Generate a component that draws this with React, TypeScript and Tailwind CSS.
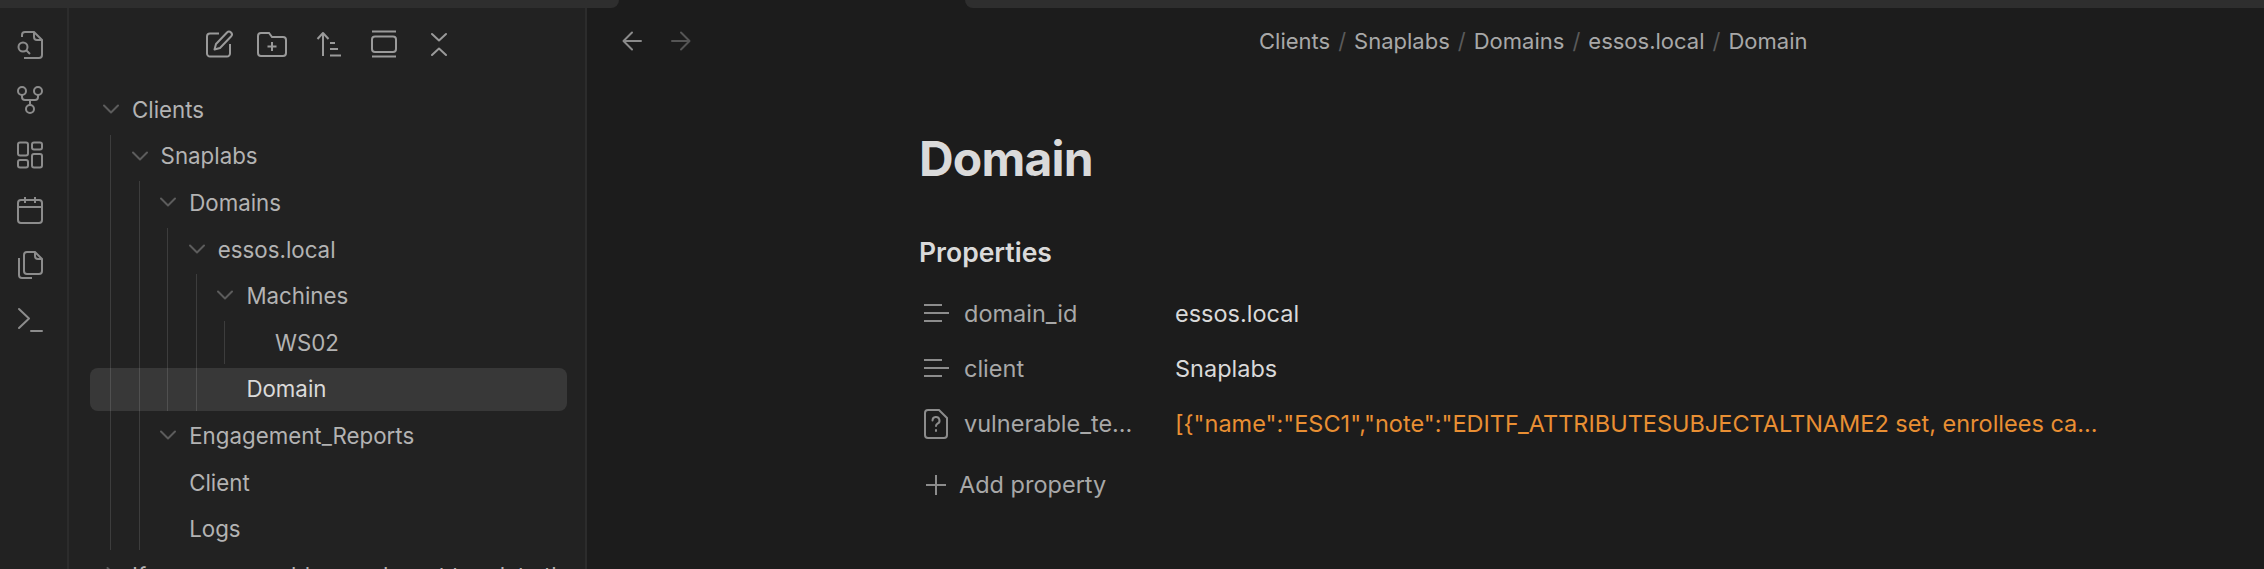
import React from "react";

const line = "fill-none stroke-current stroke-[2]";

function Chevron({ className = "" }: { className?: string }) {
  return (
    <svg viewBox="0 0 16 10" className={`w-[16px] h-[10px] text-[#5c5c5c] ${className}`}>
      <path d="M1 1.5 L8 8.5 L15 1.5" className={line} strokeLinecap="round" strokeLinejoin="round" />
    </svg>
  );
}

function Row({ label, open, closed, active }: { label: string; open?: boolean; closed?: boolean; active?: boolean }) {
  return (
    <div
      className={`h-[43px] shrink-0 flex items-center relative ${active ? "bg-white/10 rounded-lg text-[#dadada] -ml-[156px] pl-[156px]" : "text-[#b3b3b3]"}`}
    >
      {open && <Chevron className="absolute left-[-29px] top-[16px]" />}
      {closed && <Chevron className="absolute left-[-29px] top-[16px] -rotate-90" />}
      <span className="whitespace-nowrap">{label}</span>
    </div>
  );
}

// children hang off a guide line, next level is 28.6px further in
function Nest({ children }: { children: React.ReactNode }) {
  return <div className="ml-[-22px] pl-[49.6px] border-l border-[#3d3d3d] flex flex-col gap-[3.6px]">{children}</div>;
}

function Sidebar() {
  return (
    <aside className="w-[518px] shrink-0 h-full bg-[#222222] border-r-2 border-[#2c2c2c] flex flex-col overflow-hidden">
      <div className="h-[80px] shrink-0 pl-[136px] pt-[22px] flex items-start text-[#9a9a9a]">
        <svg viewBox="0 0 28 28" className="w-[28px] h-[28px]">
          <path d="M14 3.5H5a3 3 0 0 0-3 3v17a3 3 0 0 0 3 3h17a3 3 0 0 0 3-3V14" className={line} />
          <path d="M22 2.5a2.8 2.8 0 0 1 4 4L15 18l-5.5 1.5L11 14z" className={line} strokeLinejoin="round" />
        </svg>
        <svg viewBox="0 0 30 28" className="ml-[24px] w-[30px] h-[28px]">
          <path d="M4 3h8l3 4h11a3 3 0 0 1 3 3v13a3 3 0 0 1-3 3H4a3 3 0 0 1-3-3V6a3 3 0 0 1 3-3z" className={line} />
          <path d="M15 12v9M10.500 16.500h9" className={line} />
        </svg>
        <svg viewBox="0 0 26 28" className="ml-[29px] w-[26px] h-[28px]">
          <path d="M7 26V3M1.500 9L7 3l5.500 6M14 13h5M14 19h8M14 25.500h11" className={line} strokeLinejoin="round" />
        </svg>
        <svg viewBox="0 0 26 28" className="ml-[29px] w-[26px] h-[28px]">
          <path d="M1 1.500h24M1 26.500h24" className={line} />
          <rect x="1" y="6.500" width="24" height="15.500" rx="3" className={line} />
        </svg>
        <svg viewBox="0 0 16 28" className="ml-[34px] w-[16px] h-[28px]">
          <path d="M1 4l7 6.500L15 4M1 25l7-6.500L15 25" className={line} strokeLinecap="round" strokeLinejoin="round" />
        </svg>
      </div>
      <div className="pl-[63px] pr-[18px] flex flex-col gap-[3.6px] text-[22.3px]">
        <Row label="Clients" open />
        <Nest>
          <Row label="Snaplabs" open />
          <Nest>
            <Row label="Domains" open />
            <Nest>
              <Row label="essos.local" open />
              <Nest>
                <Row label="Machines" open />
                <Nest>
                  <Row label="WS02" />
                </Nest>
                <Row label="Domain" active />
              </Nest>
            </Nest>
            <Row label="Engagement_Reports" open />
            <Row label="Client" />
            <Row label="Logs" />
          </Nest>
        </Nest>
        <Row label="If you are a problem and want to relate the" closed />
      </div>
    </aside>
  );
}

function Ribbon() {
  return (
    <nav className="w-[69px] shrink-0 h-full bg-[#222222] border-r-2 border-[#2c2c2c] flex flex-col items-center pt-[23px] pr-[7px] gap-[27px] text-[#8c8c8c]">
      <svg viewBox="0 0 28 28" className="w-[28px] h-[28px]">
        <path d="M6 6V4a3 3 0 0 1 3-3h9l8 8v15a3 3 0 0 1-3 3H8" className={line} />
        <path d="M18 1v5a3 3 0 0 0 3 3h5" className={line} />
        <circle cx="7" cy="16" r="4.500" className={line} />
        <path d="M10.500 19.500L14 23" className={line} />
      </svg>
      <svg viewBox="0 0 28 28" className="w-[28px] h-[28px]">
        <circle cx="6" cy="5" r="4" className={line} />
        <circle cx="22" cy="5" r="4" className={line} />
        <circle cx="14" cy="23" r="4" className={line} />
        <path d="M6 9v2a3 3 0 0 0 3 3h10a3 3 0 0 0 3-3V9M14 14v5" className={line} />
      </svg>
      <svg viewBox="0 0 28 28" className="w-[28px] h-[28px]">
        <rect x="2" y="1.500" width="10" height="13" rx="2" className={line} />
        <rect x="16" y="1.500" width="10" height="7" rx="2" className={line} />
        <rect x="16" y="13" width="10" height="13.500" rx="2" className={line} />
        <rect x="2" y="19" width="10" height="7.500" rx="2" className={line} />
      </svg>
      <svg viewBox="0 0 28 28" className="w-[28px] h-[28px]">
        <rect x="2" y="4" width="24" height="23" rx="3" className={line} />
        <path d="M2 11h24M9 1v6M19 1v6" className={line} />
      </svg>
      <svg viewBox="0 0 28 28" className="w-[28px] h-[28px]">
        <path d="M8 5V4a3 3 0 0 1 3-3h8l7 7v12a3 3 0 0 1-3 3H11a3 3 0 0 1-3-3z" className={line} />
        <path d="M19 1v4a3 3 0 0 0 3 3h4M3 7v17a3 3 0 0 0 3 3h10" className={line} />
      </svg>
      <svg viewBox="0 0 28 28" className="w-[28px] h-[28px]">
        <path d="M3 3l10 9.500L3 22M15 25h11" className={line} strokeLinecap="round" strokeLinejoin="round" />
      </svg>
    </nav>
  );
}

function TextIcon() {
  return (
    <svg viewBox="0 0 26 20" className="w-[26px] h-[20px] -translate-y-px text-[#8c8c8c]">
      <path d="M1 2h18M1 10h25M1 18h18" className={line} />
    </svg>
  );
}

function UnknownIcon() {
  return (
    <svg viewBox="0 0 24 30" className="w-[24px] h-[30px] text-[#8c8c8c]">
      <path d="M4 1h11l8 8v17a3 3 0 0 1-3 3H4a3 3 0 0 1-3-3V4a3 3 0 0 1 3-3z" className={line} />
      <path d="M8.500 11.500a3.500 3.500 0 1 1 5 3.200c-1 .6-1.500 1.200-1.500 2.300M12 21v1" className={line} strokeLinecap="round" />
    </svg>
  );
}

function Prop({ icon, name, value, valueClass }: { icon: React.ReactNode; name: string; value: string; valueClass: string }) {
  return (
    <div className="h-[55px] flex items-center">
      <div className="w-[42px] flex justify-center pr-[2px] -ml-[3px]">{icon}</div>
      <div className="w-[217px] text-[#a8a8a8] pl-[6px] whitespace-nowrap">{name}</div>
      <div className={`whitespace-nowrap ${valueClass}`}>{value}</div>
    </div>
  );
}

function Crumbs() {
  const parts = ["Clients", "Snaplabs", "Domains", "essos.local", "Domain"];
  return (
    <div className="flex text-[22px] text-[#a8a8a8] -translate-y-px">
      {parts.map((p, i) => (
        <React.Fragment key={p}>
          {i > 0 && <span className="px-[8px] text-[#5a5a5a]">/</span>}
          <span>{p}</span>
        </React.Fragment>
      ))}
    </div>
  );
}

export default function App() {
  return (
    <div className="w-[2264px] h-[569px] overflow-hidden flex flex-col bg-[#1c1c1c] font-['Inter',sans-serif]">
      <div className="h-[8px] shrink-0 flex justify-between bg-[#1c1c1c]">
        <div className="w-[619px] bg-[#2e2e2e] rounded-br-lg" />
        <div className="w-[1299px] bg-[#2e2e2e] rounded-bl-lg" />
      </div>
      <div className="flex-1 flex min-h-0">
        <Ribbon />
        <Sidebar />
        <main className="flex-1 min-w-0 flex flex-col">
          <div className="h-[68px] shrink-0 flex items-center relative pl-[35px]">
            <svg viewBox="0 0 20 20" className="w-[20px] h-[20px] -translate-y-px text-[#8a8a8a]">
              <path d="M19 10H2M10 1.500L1.500 10l8.500 8.500" className={line} strokeLinecap="round" strokeLinejoin="round" />
            </svg>
            <svg viewBox="0 0 20 20" className="ml-[29px] w-[20px] h-[20px] -translate-y-px text-[#555555]">
              <path d="M1 10h17M10 1.500l8.500 8.500L10 18.500" className={line} strokeLinecap="round" strokeLinejoin="round" />
            </svg>
            <div className="ml-[568px]">
              <Crumbs />
            </div>
          </div>
          <div className="pl-[332px] pt-[57px]">
            <h1 className="text-[48px] leading-[52px] font-bold text-[#dadada] tracking-[-0.8px]">Domain</h1>
            <h2 className="mt-[50px] text-[26.5px] leading-[34px] font-semibold text-[#dadada]">Properties</h2>
            <div className="mt-[17px] text-[23.5px] flex flex-col">
              <Prop icon={<TextIcon />} name="domain_id" value="essos.local" valueClass="text-[#d9d9d9]" />
              <Prop icon={<TextIcon />} name="client" value="Snaplabs" valueClass="text-[#d9d9d9]" />
              <Prop
                icon={<UnknownIcon />}
                name="vulnerable_te..."
                value={'[{"name":"ESC1","note":"EDITF_ATTRIBUTESUBJECTALTNAME2 set, enrollees ca...'}
                valueClass="text-[#e98f33]"
              />
              <div className="mt-[11px] h-[46px] flex items-center text-[#a8a8a8]">
                <svg viewBox="0 0 22 22" className="ml-[6px] w-[22px] h-[22px] text-[#8c8c8c]">
                  <path d="M11 1v20M1 11h20" className={line} />
                </svg>
                <span className="ml-[12px]">Add property</span>
              </div>
            </div>
          </div>
        </main>
      </div>
    </div>
  );
}
